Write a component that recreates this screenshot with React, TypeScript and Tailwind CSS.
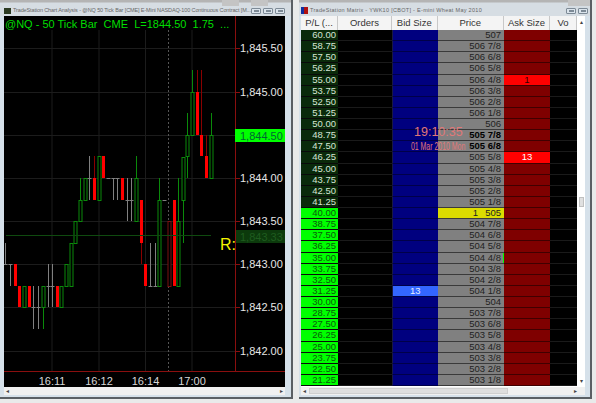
const FONT = "[font-family:'Liberation_Sans',Arial,sans-serif]";

type Bar = { x: number; kind: 'g' | 'r' | 'd' | 'n' | 'dash'; top?: number; bot?: number; hi?: number; lo?: number; tick?: number };

const bars: Bar[] = [
  { x: 5, kind: 'n', hi: 243, lo: 264, tick: 264 },
  { x: 10, kind: 'n', hi: 264, lo: 286, tick: 264 },
  { x: 14.7, kind: 'r', top: 264, bot: 286 },
  { x: 19.3, kind: 'r', top: 286, bot: 307 },
  { x: 24, kind: 'g', top: 286, bot: 307 },
  { x: 28.7, kind: 'r', top: 286, bot: 307 },
  { x: 33.3, kind: 'n', hi: 286, lo: 329, tick: 307 },
  { x: 38, kind: 'n', hi: 286, lo: 329, tick: 307 },
  { x: 42.7, kind: 'g', top: 286, bot: 307, hi: 286, lo: 329 },
  { x: 47.7, kind: 'n', hi: 264, lo: 307, tick: 286 },
  { x: 52, kind: 'n', hi: 264, lo: 307, tick: 286 },
  { x: 56.7, kind: 'r', top: 286, bot: 307 },
  { x: 61.3, kind: 'g', top: 286, bot: 307 },
  { x: 66, kind: 'g', top: 264, bot: 286 },
  { x: 70.7, kind: 'g', top: 243, bot: 286 },
  { x: 75.3, kind: 'g', top: 221, bot: 243 },
  { x: 80, kind: 'g', top: 200, bot: 221, hi: 178, lo: 221 },
  { x: 85, kind: 'g', top: 178, bot: 200 },
  { x: 89.3, kind: 'n', hi: 156, lo: 200, tick: 178 },
  { x: 94, kind: 'r', top: 178, bot: 200, hi: 156, lo: 200 },
  { x: 98.7, kind: 'g', top: 156, bot: 200 },
  { x: 103.3, kind: 'r', top: 156, bot: 178 },
  { x: 108, kind: 'dash', tick: 178 },
  { x: 112.7, kind: 'n', hi: 178, lo: 200, tick: 178 },
  { x: 117.3, kind: 'n', hi: 178, lo: 200, tick: 178 },
  { x: 122, kind: 'r', top: 178, bot: 200 },
  { x: 126.7, kind: 'n', hi: 178, lo: 221, tick: 200 },
  { x: 131.3, kind: 'n', hi: 178, lo: 221, tick: 200 },
  { x: 136, kind: 'g', top: 178, bot: 221, hi: 156, lo: 221 },
  { x: 140.7, kind: 'r', top: 200, bot: 243, hi: 200, lo: 264 },
  { x: 145.3, kind: 'r', top: 264, bot: 286, hi: 264, lo: 286 },
  { x: 150, kind: 'n', hi: 243, lo: 286, tick: 286 },
  { x: 155, kind: 'n', hi: 243, lo: 286, tick: 286 },
  { x: 159.3, kind: 'g', top: 200, bot: 286, hi: 178, lo: 286 },
  { x: 164, kind: 'dash', tick: 200 },
  { x: 168.7, kind: 'd', top: 221, bot: 286 },
  { x: 173.5, kind: 'r', top: 200, bot: 286 },
  { x: 178, kind: 'g', top: 221, bot: 286, hi: 178, lo: 286 },
  { x: 182.7, kind: 'g', top: 157, bot: 200, hi: 157, lo: 243 },
  { x: 187.3, kind: 'g', top: 135, bot: 156, hi: 113, lo: 178 },
  { x: 192, kind: 'g', top: 92, bot: 135, hi: 70, lo: 135 },
  { x: 196.7, kind: 'r', top: 92, bot: 135, hi: 70, lo: 135 },
  { x: 201.3, kind: 'r', top: 135, bot: 156, hi: 70, lo: 156 },
  { x: 206, kind: 'r', top: 156, bot: 178, hi: 135, lo: 178 },
  { x: 211, kind: 'g', top: 135, bot: 178, hi: 113, lo: 178 },
];

const prices = [
  ['1,845.50', 48.3],
  ['1,845.00', 91.7],
  ['1,844.00', 178.3],
  ['1,843.50', 221],
  ['1,843.00', 264],
  ['1,842.50', 307.3],
  ['1,842.00', 350.7],
] as const;

function BarMark({ b }: { b: Bar }) {
  const x = Math.round(b.x) + 0.5;
  if (b.kind === 'dash' || b.kind === 'n') {
    return (
      <g stroke="#808080" strokeWidth="1">
        {b.hi !== undefined && <line x1={x} x2={x} y1={b.hi} y2={b.lo} />}
        {b.tick !== undefined && <line x1={x - 2} x2={x + 2} y1={b.tick + 0.5} y2={b.tick + 0.5} />}
      </g>
    );
  }
  if (b.kind === 'r') {
    return (
      <g>
        {b.hi !== undefined && <line x1={x} x2={x} y1={b.hi} y2={b.lo} stroke="#8a0000" />}
        <rect x={x - 1.5} y={b.top} width={3} height={(b.bot ?? 0) - (b.top ?? 0)} fill="#ff0000" />
      </g>
    );
  }
  const c = b.kind === 'g' ? '#0a8a0a' : '#7a1010';
  return (
    <g>
      {b.hi !== undefined && <line x1={x} x2={x} y1={b.hi} y2={b.lo} stroke={c} />}
      <rect x={x - 1.5} y={(b.top ?? 0) + 0.5} width={3} height={(b.bot ?? 0) - (b.top ?? 0)} fill="#000" stroke={c} />
    </g>
  );
}

function Chart() {
  return (
    <svg width="281" height="371" viewBox="4 16 281 371" className={`block ${FONT}`}>
      <rect x="4" y="16" width="281" height="371" fill="#000" />
      {[48.3, 91.7, 135, 178.3, 221, 264, 307.3, 350.7].map((y) => (
        <line key={y} x1="4" x2="235" y1={Math.round(y) + 0.5} y2={Math.round(y) + 0.5} stroke="#1c1c1c" />
      ))}
      {[52, 99, 145.5, 192].map((x) => (
        <line key={x} x1={x} x2={x} y1="30" y2="371" stroke="#1c1c1c" />
      ))}
      <line x1="168.5" x2="168.5" y1="30" y2="371" stroke="#555" strokeDasharray="2 2" />
      {bars.map((b) => (
        <BarMark key={b.x} b={b} />
      ))}
      <line x1="6" x2="211" y1="235.5" y2="235.5" stroke="#0f4a0f" />
      <line x1="235.5" x2="235.5" y1="16" y2="371" stroke="#8a0f0f" />
      <line x1="4" x2="285" y1="371.5" y2="371.5" stroke="#8a0f0f" />
      {prices.map(([t, y]) => (
        <g key={t}>
          <line x1="235" x2="240" y1={Math.round(y) + 0.5} y2={Math.round(y) + 0.5} stroke="#8a0f0f" />
          <text x="240" y={y + 4} fontSize="11" fill="#e6e6e6">{t}</text>
        </g>
      ))}
      <rect x="235" y="129" width="50" height="13" fill="#00ff00" />
      <text x="240" y="140" fontSize="11" fill="#063">{'1,844.50'}</text>
      <rect x="235" y="230" width="50" height="13" fill="#0c3a0c" />
      <text x="240" y="241" fontSize="11" fill="#1f5c1f">{'1,843.33'}</text>
      <text x="220" y="250" fontSize="16" fill="#f4f400">R:</text>
      <rect x="235" y="230" width="1" height="13" fill="#8a0f0f" />
      <text x="5" y="28" fontSize="11" fill="#00dd00" xmlSpace="preserve">{'@NQ - 50 Tick Bar  CME  L=1844.50  1.75  ...'}</text>
      {[['16:11', 52], ['16:12', 99], ['16:14', 145.5], ['17:00', 192]].map(([t, x]) => (
        <text key={t as string} x={x as number} y="385" fontSize="11" fill="#d8d8d8" textAnchor="middle">{t}</text>
      ))}
    </svg>
  );
}

function WinButtons({ count }: { count: number }) {
  return (
    <div className="flex gap-[2px] items-center">
      {Array.from({ length: count }).map((_, i) => (
        <div key={i} className="w-[10px] h-[6px] border border-[#7d8a96] rounded-[1px] bg-[#dbe4ec] flex items-center justify-center">
          <div className="w-[5px] h-[2px] border border-[#7d8a96]" />
        </div>
      ))}
    </div>
  );
}

const COLS = ['w-[37px]', 'w-[54px]', 'w-[45.5px]', 'w-[66.5px]', 'w-[46px]', 'w-[27px]'];

const ROWS = [
  ['60.00', '507'], ['58.75', '506 7/8'], ['57.50', '506 6/8'], ['56.25', '506 5/8'],
  ['55.00', '506 4/8'], ['53.75', '506 3/8'], ['52.50', '506 2/8'], ['51.25', '506 1/8'],
  ['50.00', '506'], ['48.75', '505 7/8'], ['47.50', '505 6/8'], ['46.25', '505 5/8'],
  ['45.00', '505 4/8'], ['43.75', '505 3/8'], ['42.50', '505 2/8'], ['41.25', '505 1/8'],
  ['40.00', '505'], ['38.75', '504 7/8'], ['37.50', '504 6/8'], ['36.25', '504 5/8'],
  ['35.00', '504 4/8'], ['33.75', '504 3/8'], ['32.50', '504 2/8'], ['31.25', '504 1/8'],
  ['30.00', '504'], ['28.75', '503 7/8'], ['27.50', '503 6/8'], ['26.25', '503 5/8'],
  ['25.00', '503 4/8'], ['23.75', '503 3/8'], ['22.50', '503 2/8'], ['21.25', '503 1/8'],
];

function Row({ pl, price, i }: { pl: string; price: string; i: number }) {
  const lime = i >= 16;
  const current = price === '505';
  const bold = price === '505 7/8' || price === '505 6/8';
  const askRed = pl === '55.00' || pl === '46.25';
  const bidHit = pl === '31.25';
  return (
    <div className="flex h-[11.14px] leading-[10px]">
      <div className={`${COLS[0]} text-right pr-[2px] border-b border-[#0a0a0a] ${lime ? 'bg-[#00ff00] text-[#0b5a0b]' : 'bg-[#0a2a0a] text-[#d5e5d5]'}`}>{pl}</div>
      <div className={`${COLS[1]} bg-black border-b border-[#1a1a1a]`} />
      <div className={`${COLS[2]} text-center border-b border-[#000048] border-l border-l-[#1a1a40] ${bidHit ? 'bg-[#3366ff] text-[#e8eeff]' : 'bg-[#00007f]'}`}>{bidHit ? '13' : ''}</div>
      <div className={`${COLS[3]} relative flex justify-end gap-[7px] pr-[3px] border-b border-[#3a3a3a] ${current ? 'bg-[#dcdc00] text-[#222]' : 'bg-[#808080] text-[#222]'} ${bold ? 'font-bold text-black' : ''}`}>
        {current && <span>1</span>}
        <span className="whitespace-nowrap">{price}</span>
        {price === '504 4/8' && <span className="absolute right-0 top-0 w-[1.5px] h-[10px] bg-[#00ff00]" />}
      </div>
      <div className={`${COLS[4]} text-center border-b border-[#400000] ${askRed ? 'bg-[#ff0000]' : 'bg-[#7f0000]'} ${pl === '46.25' ? 'text-white' : 'text-[#300]'}`}>
        {pl === '55.00' ? '1' : pl === '46.25' ? '13' : ''}
      </div>
      <div className={`${COLS[5]} bg-black border-b border-[#1a1a1a]`} />
    </div>
  );
}

export default function App() {
  const headers = ['P/L (...', 'Orders', 'Bid Size', 'Price', 'Ask Size', 'Vo'];
  return (
    <div className={`w-[596px] h-[403px] overflow-hidden relative bg-[#e9eaea] ${FONT} flex gap-[6px]`}>
      {/* chart window */}
      <div className="w-[293px] h-[399px] flex flex-col bg-[#d6e1ea] border-r-2 border-b-2 border-r-[#5a5f64] border-b-[#5a5f64]">
        <div className="h-[16px] flex items-center pt-[5px] pl-[4px] pr-[6px] gap-[2px] bg-[linear-gradient(#b4b4b4_0,#b4b4b4_2px,#d6dde3_3px)]">
          <div className="w-[7px] h-[6px] bg-[#2c3a22]" />
          <div className="flex-1 min-w-0 text-[5.5px] tracking-[-0.12px] text-[#666] whitespace-nowrap">TradeStation Chart Analysis - @NQ 50 Tick Bar [CME] E-Mini NASDAQ-100 Continuous Contract [M...</div>
          <WinButtons count={3} />
        </div>
        <div className="pl-[4px]">
          <Chart />
        </div>
        <div className="ml-[4px] w-[281px] h-[8px] bg-[#f0f0f0] flex items-center justify-between px-[2px] text-[6px] leading-none text-[#444]">
          <span>◂</span>
          <span>▸</span>
        </div>
      </div>

      {/* matrix window */}
      <div className="w-[293px] h-[399px] flex flex-col bg-[#d6e1ea] border-r-2 border-b-2 border-r-[#5a5f64] border-b-[#5a5f64]">
        <div className="h-[16px] flex items-center pt-[5px] pl-[2px] pr-[2px] gap-[2px] bg-[linear-gradient(#b4b4b4_0,#b4b4b4_2px,#d6dde3_3px)]">
          <div className="w-[7px] h-[7px] bg-[linear-gradient(90deg,#1030a0_50%,#b01010_50%)]" />
          <div className="flex-1 min-w-0 text-[5.5px] tracking-[0.3px] text-[#666] whitespace-nowrap">TradeStation Matrix - YWK10 [CBOT] - E-mini Wheat May 2010</div>
          <WinButtons count={2} />
        </div>
        <div className="flex h-[371px] bg-white ml-[2px] mr-[5px] text-[9.5px]">
          <div className="flex flex-col relative">
            <div className="flex h-[14px] bg-[#f4f4f4] text-[#333] items-center">
              {headers.map((h, i) => (
                <div key={h} className={`${COLS[i]} text-center h-full leading-[14px] border-r border-[#c8c8c8] whitespace-nowrap overflow-hidden`}>
                  {h}
                </div>
              ))}
            </div>
            {ROWS.map(([pl, price], i) => (
              <Row key={pl} pl={pl} price={price} i={i} />
            ))}
            <div className="absolute left-[113px] top-[110px] text-[12.5px] leading-none text-[#e07878] whitespace-nowrap">19:10:35</div>
            <div className="absolute left-[112px] top-[125px] w-[50px] text-[11px] leading-none text-[#e07878] whitespace-nowrap flex justify-center">
              <span className="scale-x-[0.63]">01 Mar 2010 Mon</span>
            </div>
          </div>
          <div className="flex-1 flex flex-col items-center justify-between text-[6px] leading-none text-[#444] py-[3px] bg-white">
            <span>▴</span>
            <span className="w-[5px] h-[10px] bg-[#e0e0e0] border border-[#c0c0c0]" />
            <span>▾</span>
          </div>
        </div>
        <div className="ml-[2px] mr-[5px] h-[8px] bg-[#f0f0f0] flex items-center px-[2px] gap-[3px] text-[6px] leading-none text-[#444]">
          <span>◂</span>
          <span className="w-[199px] h-[6px] bg-[#dedede] border border-[#cfcfcf]" />
          <span className="ml-auto mr-[6px]">▸</span>
        </div>
      </div>

      {/* window tabs peeking out at the top edge */}
      <div className="absolute left-[222px] top-0 w-[17px] h-[6px] bg-[#c4c4c4]" />
      <div className="absolute left-[251px] top-0 w-[17px] h-[6px] bg-[#c4c4c4]" />
      <div className="absolute left-[568px] top-0 w-[22px] h-[6px] bg-[#c4c4c4]" />
    </div>
  );
}
